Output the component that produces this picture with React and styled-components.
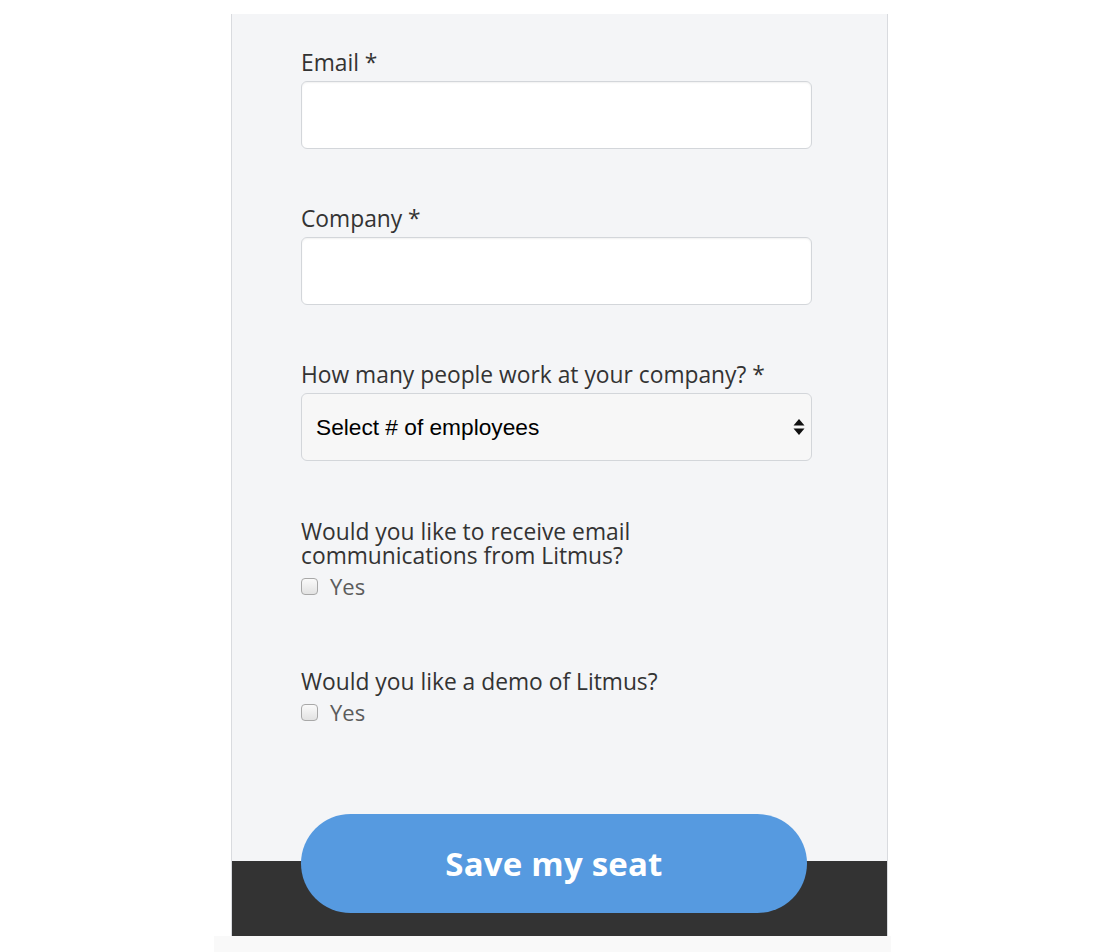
// App.jsx:
// Signup form panel with a pill button over the dark footer band.

// Imports
//////////////////////////////////////////////////////////////////////

import React from 'react';
import styled, { createGlobalStyle } from 'styled-components';

// Styles
//////////////////////////////////////////////////////////////////////

const GlobalStyle = createGlobalStyle`
    html, body {
        margin: 0;
        padding: 0;
        background: #ffffff;
    }
    * {
        box-sizing: border-box;
    }
`

const Page = styled.div`
    padding-top: 14px;
    font-family: "Open Sans", "Noto Sans", sans-serif;
`

const Panel = styled.div`
    margin-left: 231px;
    width: 657px;
    background: #f4f5f7;
    border-left: 1px solid #d9dbdf;
    border-right: 1px solid #d9dbdf;
    display: flex;
    flex-direction: column;
`

const Form = styled.form`
    display: flex;
    flex-direction: column;
    padding: 36px 76px 0 69px;
`

const Field = styled.div`
    display: flex;
    flex-direction: column;
    margin-top: ${p => p.gap || 0}px;
`

const Label = styled.label`
    font-size: 22.8px;
    line-height: 24px;
    color: #333333;
    padding-top: 1px;
    margin-bottom: 6px;
`

const TextInput = styled.input`
    width: 511px;
    height: 68px;
    border: 1px solid #d3d6da;
    border-radius: 6px;
    background: #ffffff;
    box-shadow: inset 0 1px 2px rgba(0, 0, 0, 0.06);
    outline: none;
    padding: 0 14px;
    font-size: 20px;
`

const SelectWrap = styled.div`
    position: relative;
    width: 511px;
`

const Select = styled.select`
    appearance: none;
    width: 100%;
    height: 68px;
    border: 1px solid #d3d6da;
    border-radius: 6px;
    background: #f7f7f7;
    padding: 0 14px;
    font-family: "Liberation Sans", Arial, sans-serif;
    font-size: 22.7px;
    color: #000000;
    outline: none;
`

const SelectArrow = styled.svg`
    position: absolute;
    right: 7px;
    top: 26px;
    pointer-events: none;
`

const CheckRow = styled.label`
    display: flex;
    align-items: center;
    height: 24px;
    font-size: 22px;
    color: #5c5c5c;
`

const Check = styled.input`
    appearance: none;
    width: 17px;
    height: 17px;
    margin: 0 12px 0 0;
    border: 1px solid #a8a8a8;
    border-radius: 4px;
    background: linear-gradient(#fafafa, #e2e2e2);
`

const ButtonBar = styled.div`
    margin-top: 90px;
    padding: 0 0 23px 69px;
    background: linear-gradient(#f4f5f7 0 47px, #333333 47px);
`

const SaveBtn = styled.button`
    width: 506px;
    height: 99px;
    border: none;
    border-radius: 50px;
    background: #569ae0;
    color: #ffffff;
    font-family: "Open Sans", "Noto Sans", sans-serif;
    font-weight: 700;
    font-size: 33px;
    letter-spacing: 0.2px;
    cursor: pointer;
`

const BottomStrip = styled.div`
    margin-left: 214px;
    width: 677px;
    height: 16px;
    background: #f9f9f9;
`

// Begin Component
//////////////////////////////////////////////////////////////////////

const App = () => {
    return (
      <Page>
        <GlobalStyle />
        <Panel>
          <Form>
            <Field>
              <Label>Email *</Label>
              <TextInput type="email" />
            </Field>
            <Field gap={57}>
              <Label>Company *</Label>
              <TextInput type="text" />
            </Field>
            <Field gap={57}>
              <Label>How many people work at your company? *</Label>
              <SelectWrap>
                <Select defaultValue="">
                  <option value="">Select # of employees</option>
                </Select>
                <SelectArrow width="12" height="16" viewBox="0 0 12 16">
                  <path d="M6 0 L11.5 6.5 L0.5 6.5 Z" fill="#111" />
                  <path d="M6 16 L11.5 9.5 L0.5 9.5 Z" fill="#111" />
                </SelectArrow>
              </SelectWrap>
            </Field>
            <Field gap={58}>
              <Label>Would you like to receive email<br />communications from Litmus?</Label>
              <CheckRow>
                <Check type="checkbox" />
                Yes
              </CheckRow>
            </Field>
            <Field gap={71}>
              <Label>Would you like a demo of Litmus?</Label>
              <CheckRow>
                <Check type="checkbox" />
                Yes
              </CheckRow>
            </Field>
          </Form>
          <ButtonBar>
            <SaveBtn type="button">Save my seat</SaveBtn>
          </ButtonBar>
        </Panel>
        <BottomStrip />
      </Page>
    );
  };

export default App;

//////////////////////////////////////////////////////////////////////
// End Component
